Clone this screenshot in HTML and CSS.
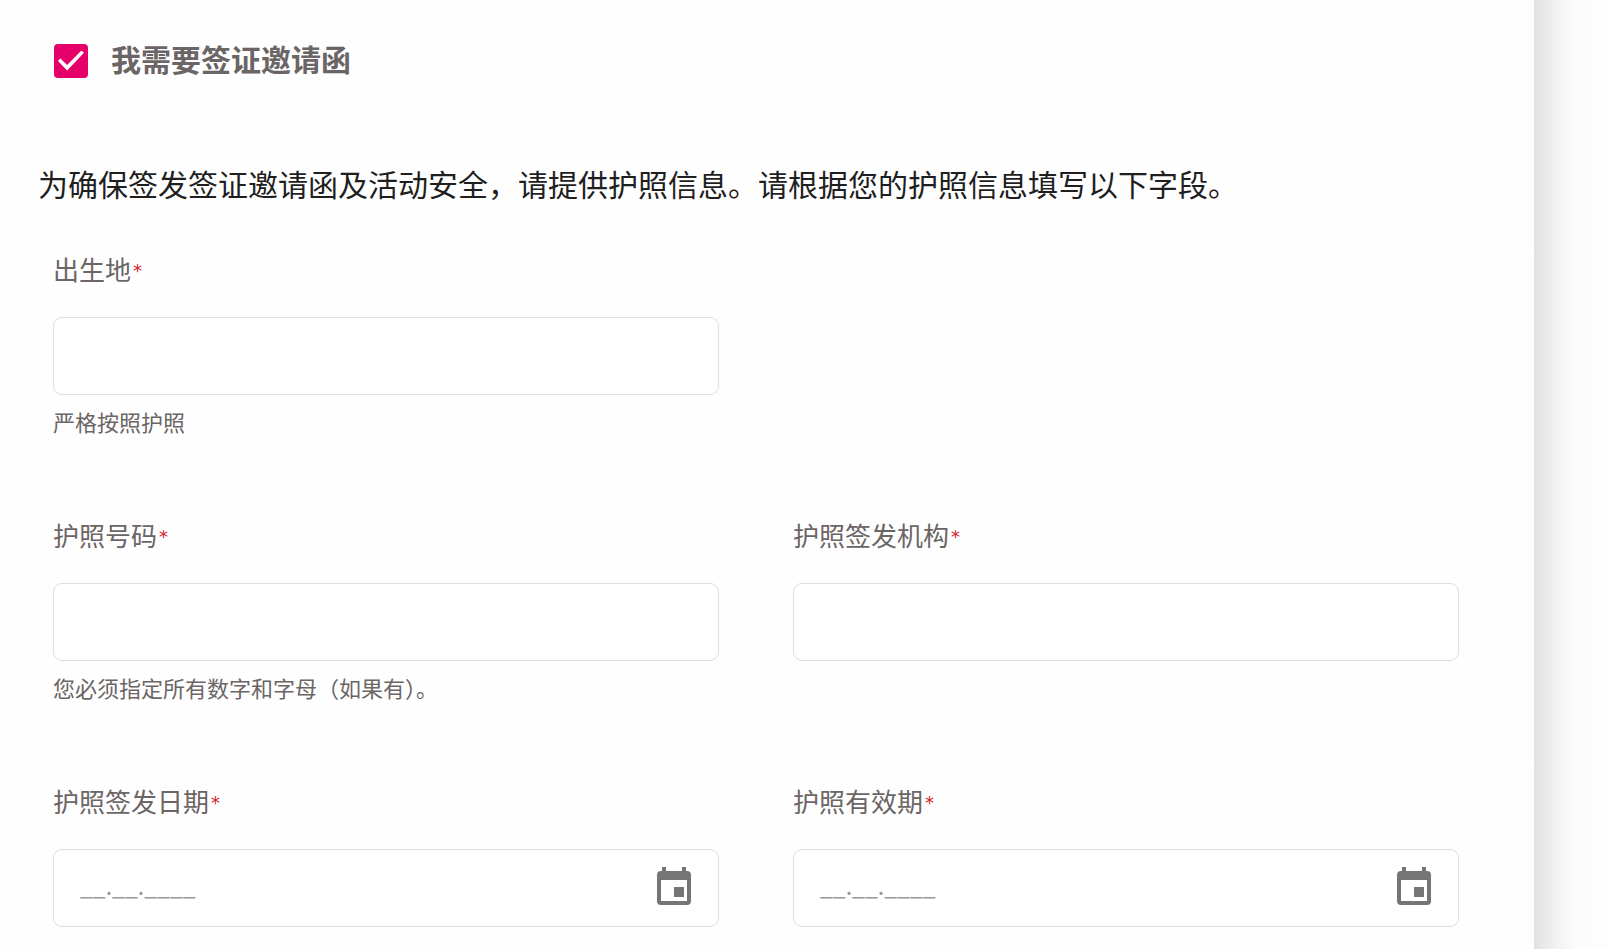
FILE: index.html
```html
<!DOCTYPE html>
<html lang="zh-CN">
<head>
<meta charset="utf-8">
<title>签证邀请函</title>
<link rel="stylesheet" href="styles.css">
</head>
<body>
<main class="card">
<form class="form">
  <label class="consent">
    <input class="consent-box" type="checkbox" checked>
    <span class="consent-text">我需要签证邀请函</span>
  </label>
  <p class="intro">为确保签发签证邀请函及活动安全，请提供护照信息。请根据您的护照信息填写以下字段。</p>
  <div class="fields">
    <div class="field field-first">
      <label class="label" for="birthplace">出生地<span class="required">*</span></label>
      <input class="control" id="birthplace" type="text" aria-describedby="birthplace-help">
      <p class="help" id="birthplace-help">严格按照护照</p>
    </div>
    <div class="field">
      <label class="label" for="number">护照号码<span class="required">*</span></label>
      <input class="control" id="number" type="text" aria-describedby="number-help">
      <p class="help" id="number-help">您必须指定所有数字和字母（如果有）。</p>
    </div>
    <div class="field">
      <label class="label" for="authority">护照签发机构<span class="required">*</span></label>
      <input class="control" id="authority" type="text">
    </div>
    <div class="field">
      <label class="label" for="issued">护照签发日期<span class="required">*</span></label>
      <div class="control date">
        <input class="date-input" id="issued" type="text" placeholder="__.__.____">
        <button class="date-button" type="button" aria-label="选择签发日期">
          <svg class="icon" viewBox="0 0 34 38"><path fill-rule="evenodd" d="M5 0h4v4h16V0h4v4h1a4 4 0 0 1 4 4v26a4 4 0 0 1-4 4H4a4 4 0 0 1-4-4V8a4 4 0 0 1 4-4h1zM4 13v21h26V13zM17 20h10v10H17z"/></svg>
        </button>
      </div>
    </div>
    <div class="field">
      <label class="label" for="expires">护照有效期<span class="required">*</span></label>
      <div class="control date">
        <input class="date-input" id="expires" type="text" placeholder="__.__.____">
        <button class="date-button" type="button" aria-label="选择有效期">
          <svg class="icon" viewBox="0 0 34 38"><path fill-rule="evenodd" d="M5 0h4v4h16V0h4v4h1a4 4 0 0 1 4 4v26a4 4 0 0 1-4 4H4a4 4 0 0 1-4-4V8a4 4 0 0 1 4-4h1zM4 13v21h26V13zM17 20h10v10H17z"/></svg>
        </button>
      </div>
    </div>
  </div>
</form>
</main>
</body>
</html>
```
FILE: styles.css
```css
* { box-sizing: border-box; }
body {
  margin: 0;
  padding-right: 74px;
  background: linear-gradient(to right, #e1e1e1 0, #eaeaea 12px, #f4f4f4 26px, #fbfbfb 40px, #fdfdfd 54px) right top / 74px 100% no-repeat #fdfdfd;
  color: #1f1f1f;
  font-family: "Noto Sans CJK SC", sans-serif;
}
p { margin: 0; }
.card {
  min-height: 100vh;
  padding: 39px 75px 22px 38px;
  background: #fefefe;
}
.consent {
  display: flex;
  align-items: center;
  gap: 23px;
  width: fit-content;
  padding-left: 16px;
  font-size: 30px;
  font-weight: 700;
  line-height: 38px;
  color: #6b6565;
}
.consent-text { padding-bottom: 5px; }
.consent-box {
  appearance: none;
  width: 34px;
  height: 34px;
  margin: 0;
  border-radius: 4px;
  background: #e6006a;
  display: grid;
  place-items: center;
}
.consent-box:checked::before {
  content: "";
  width: 26px;
  height: 20px;
  background: #fff;
  clip-path: polygon(0 52%, 9% 40%, 35% 72%, 90% 0, 100% 11%, 35% 100%);
}
.intro {
  margin-top: 79px;
  font-size: 30px;
  line-height: 44px;
}
.fields {
  display: grid;
  grid-template-columns: 1fr 1fr;
  gap: 78px 74px;
  padding: 44px 0 0 15px;
}
.field {
  display: flex;
  flex-direction: column;
  min-width: 0;
}
.field-first { grid-column: 1; }
.field-first + .field { grid-column: 1; }
.label {
  margin-bottom: 28px;
  font-size: 26px;
  line-height: 40px;
  color: #6b6565;
}
.required {
  margin-left: 2px;
  font-family: "DejaVu Sans", sans-serif;
  font-size: 18px;
  line-height: 1;
  vertical-align: 3px;
  color: #d0202c;
}
.control {
  width: 100%;
  height: 78px;
  padding: 0 26px;
  border: 1px solid #dedede;
  border-radius: 9px;
  background: #fff;
  font: 23px/32px "Noto Sans CJK SC", sans-serif;
}
.help {
  margin-top: 10px;
  font-size: 22px;
  line-height: 32px;
  color: #6b6565;
}
.date {
  display: flex;
  align-items: center;
  justify-content: space-between;
}
.date-input {
  flex: 1;
  min-width: 0;
  padding: 0 0 7px;
  border: 0;
  background: none;
  font: inherit;
}
.date-input::placeholder {
  color: #999;
  opacity: 1;
}
.date-button {
  display: flex;
  padding: 0 1px 4px 0;
  border: 0;
  background: none;
}
.icon {
  width: 34px;
  height: 38px;
  fill: #757575;
}
```
